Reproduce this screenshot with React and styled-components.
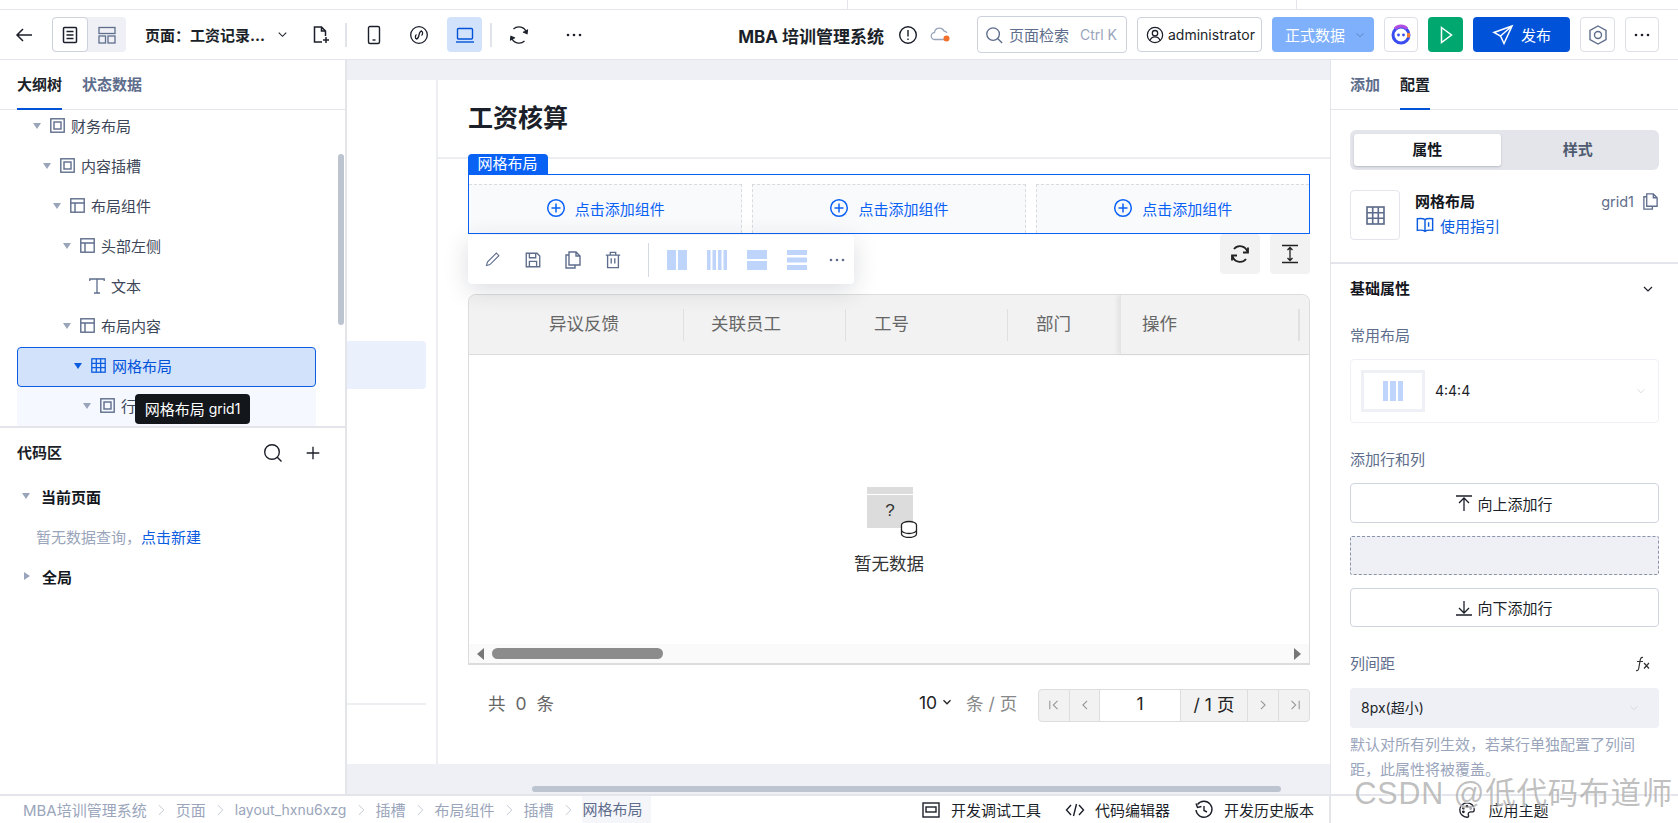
import React from 'react';
import styled, { createGlobalStyle } from 'styled-components';

const Global = createGlobalStyle`
  html, body { margin: 0; padding: 0; background: #fff; }
  body { font-family: Inter, "Noto Sans CJK SC", "Noto Sans", sans-serif; font-size: 15px; color: #1b1f29; }
  * { box-sizing: border-box; }
  #root { width: 1678px; height: 823px; overflow: hidden; }
`;

const Shell = styled.div`position: relative; width: 1678px; height: 823px; display: flex; flex-direction: column; overflow: hidden;`;
const TopStrip = styled.div`height: 10px; flex: none; border-bottom: 1px solid #e3e5ea; display: flex;`;
const StripTick = styled.div`width: 1px; height: 9px; background: #e3e5ea; margin-left: ${p => p.$ml}px;`;

const Header = styled.header`height: 50px; flex: none; display: flex; align-items: center; border-bottom: 1px solid #e3e5ea; padding: 0 19px 0 14px; background: #fff;`;
const IconSlot = styled.span`display: inline-flex; align-items: center; justify-content: center; flex: none; width: ${p => p.$w || 20}px; height: ${p => p.$h || p.$w || 20}px; margin-left: ${p => p.$ml || 0}px; color: ${p => p.$c || '#1b1f29'};`;
const ViewSwitch = styled.div`display: flex; margin-left: 18px; width: 74px; height: 35px; background: #eff0f5; border-radius: 4px;`;
const ViewTab = styled.div`width: ${p => p.$on ? 36 : 38}px; display: flex; align-items: center; justify-content: center; border-radius: 4px; color: ${p => p.$on ? '#1b1f29' : '#5e6d8c'}; ${p => p.$on && 'background:#fff;border:1px solid #ccd1dc;'}`;
const PageName = styled.div`margin-left: 19px; width: 122px; font-weight: 700; font-size: 15px; white-space: nowrap; color: #1b1f29;`;
const VDivider = styled.div`width: 2px; height: 24px; background: #e0e3e9; flex: none; margin-left: ${p => p.$ml}px;`;
const DeviceOn = styled.div`width: 35px; height: 35px; flex: none; margin-left: ${p => p.$ml}px; background: #d2e2fb; border-radius: 4px; display: flex; align-items: center; justify-content: center; color: #0052d9;`;
const Title = styled.div`margin-left: auto; padding-top: 2px; font-weight: 700; font-size: 17px; white-space: nowrap; color: #1b1f29;`;
const SearchBox = styled.div`margin-left: 25px; width: 150px; height: 37px; border: 1px solid #ccd1dc; border-radius: 4px; display: flex; align-items: center; padding: 0 9px 0 6px; gap: 5px; color: #5e6d8c; white-space: nowrap;`;
const Kbd = styled.span`margin-left: auto; color: #9aa5bb; font-size: 14px;`;
const UserBox = styled.div`margin-left: 10px; width: 125px; height: 35px; border: 1px solid #ccd1dc; border-radius: 4px; display: flex; align-items: center; padding-left: 7px; gap: 3px; color: #1b1f29; font-size: 14px; white-space: nowrap;`;
const DataBtn = styled.div`margin-left: 10px; width: 102px; height: 35px; background: #7fb0fb; border-radius: 4px; color: #fff; display: flex; align-items: center; padding-left: 13px; gap: 8px;`;
const IconBtn = styled.div`margin-left: 10px; width: ${p => p.$w || 34}px; height: 35px; border: 1px solid #dcdfe6; border-radius: 4px; display: flex; align-items: center; justify-content: center; color: #5e6d8c; background: #fff;`;
const GreenBtn = styled.div`margin-left: 10px; width: 35px; height: 35px; background: #00a870; border-radius: 4px; display: flex; align-items: center; justify-content: center; color: #fff;`;
const PublishBtn = styled.div`margin-left: 10px; width: 97px; height: 35px; background: #0052d9; border-radius: 4px; display: flex; align-items: center; justify-content: center; gap: 7px; color: #fff;`;

const Body = styled.div`flex: 1; min-height: 0; display: flex;`;
const MainCol = styled.div`width: 1330px; flex: none; display: flex; flex-direction: column;`;
const WorkRow = styled.div`flex: 1; min-height: 0; display: flex;`;

const LeftPanel = styled.aside`position: relative; width: 347px; flex: none; border-right: 2px solid #e3e5ea; display: flex; flex-direction: column; background: #fff;`;
const Tabs = styled.div`height: 50px; flex: none; display: flex; gap: 20px; padding-left: ${p => p.$pl || 17}px; border-bottom: 1px solid #e3e5ea;`;
const Tab = styled.div`height: 50px; display: flex; align-items: center; padding-bottom: 4px; font-weight: 700; font-size: 15px; color: ${p => p.$on ? '#1b1f29' : '#5e6d8c'}; ${p => p.$on && 'box-shadow: inset 0 -2px 0 #0052d9;'}`;
const TreeBox = styled.div`position: relative; height: 318px; flex: none; overflow: hidden; border-bottom: 2px solid #e3e5ea; padding: 0 29px 0 17px;`;
const TreeInner = styled.div`margin-top: -3.5px;`;
const TreeRow = styled.div`height: 40px; display: flex; align-items: center; padding-bottom: 2px; padding-left: ${p => 16 + p.$lv * 10}px; border-radius: 4px; color: ${p => p.$sel ? '#0052d9' : '#3c4658'}; ${p => p.$sel && 'background:#d2e2fb;border:1.5px solid #0b5ce0;'} ${p => p.$hov && 'background:#f5f8ff;'}`;
const Caret = styled.span`width: 0; height: 0; flex: none; border-left: 4px solid transparent; border-right: 4px solid transparent; border-top: 6px solid ${p => p.$c || '#9aa5bb'}; margin-right: 8px;`;
const CaretSpace = styled.span`width: 8px; flex: none; margin-right: 8px;`;
const CaretRight = styled.span`width: 0; height: 0; flex: none; border-top: 4px solid transparent; border-bottom: 4px solid transparent; border-left: 6px solid #9aa5bb;`;
const TreeLabel = styled.span`margin-left: 6px; white-space: nowrap;`;
const TreeBar = styled.div`position: absolute; left: 338px; top: 94px; width: 6px; height: 171px; border-radius: 3px; background: #bcc4d0;`;
const Tip = styled.div`position: absolute; left: 135px; top: 284px; width: 115px; height: 30px; background: #13161b; border-radius: 4px; color: #fff; font-size: 15px; padding-bottom: 2px; display: flex; align-items: center; justify-content: center; gap: 4px; white-space: nowrap;`;
const TipId = styled.span`font-size: 14px;`;

const CodeArea = styled.div`flex: 1; padding: 0 0 0 17px;`;
const CodeHead = styled.div`height: 50px; display: flex; align-items: center; padding-right: 22px;`;
const CodeTitle = styled.span`font-weight: 700; padding-bottom: 4px;`;
const CodeTools = styled.div`margin-left: auto; display: flex; gap: 20px;`;
const CodeRow = styled.div`height: 40px; display: flex; align-items: center; padding-bottom: 4px; padding-left: ${p => p.$pl || 6}px; font-weight: ${p => p.$bold ? 700 : 400}; color: ${p => p.$bold ? '#14171d' : '#9aa5bb'};`;
const CodeName = styled.span`margin-left: ${p => p.$ml}px;`;
const LinkText = styled.span`color: #0b5ce0;`;

const Canvas = styled.main`flex: 1; min-width: 0; position: relative; overflow: hidden; background: #eff0f5; padding-top: 20px;`;
const HBar = styled.div`position: absolute; left: 185px; top: 726px; width: 749px; height: 6px; border-radius: 3px; background: #bcc4d0;`;
const Frame = styled.div`height: 684px; background: #fff; display: flex;`;
const SideMenu = styled.div`width: 91px; flex: none; border-right: 2px solid #eceef2; padding-right: 10px;`;
const MenuOn = styled.div`margin-top: 261px; height: 48px; background: #eaf1fd; border-radius: 0 4px 4px 0;`;
const MenuLine = styled.div`margin-top: 314px; height: 2px; background: #eceef2;`;
const Page = styled.div`flex: 1; min-width: 0; overflow: hidden;`;
const PageHead = styled.div`height: 79px; border-bottom: 2px solid #eceef2; padding: 0 0 6px 30px; display: flex; align-items: center; font-size: 25px; font-weight: 700; color: #1b1f29;`;
const PageBody = styled.div`padding: 15px 20px 0 30px;`;
const GridSel = styled.div`position: relative; height: 60px; border: 1.5px solid #0a62f5; padding-top: 9px; display: grid; grid-template-columns: repeat(3, 1fr); gap: 10px;`;
const GridTag = styled.div`position: absolute; left: -1.5px; top: -21.5px; width: 80px; height: 20px; background: #0a62f5; color: #fff; border-radius: 4px 4px 0 0; font-size: 15px; line-height: 19px; text-align: center;`;
const GridCell = styled.div`border: 1px dashed #d8dbe0; border-bottom: 0; ${p => p.$first && 'border-left:0;'} ${p => p.$last && 'border-right:0;'} background: #f9fafc; color: #0a62f5; display: flex; align-items: center; justify-content: center; gap: 9px; padding-bottom: 2px;`;
const FloatBar = styled.div`position: absolute; z-index: 3; left: -1.5px; top: 60px; width: 386px; height: 49px; background: #fff; border-radius: 4px; box-shadow: 0 6px 24px rgba(30,40,60,.16); display: flex; align-items: center; color: #5e6d8c; padding-left: 15px;`;
const BarIcon = styled.span`width: 20px; height: 20px; flex: none; margin-right: 20px; display: inline-flex; align-items: center; justify-content: center;`;
const BarDivider = styled.span`width: 1px; height: 34px; background: #d5d9e2; margin: 0 18px 0 5px; flex: none;`;
const SideActions = styled.div`height: 40px; display: flex; justify-content: flex-end; gap: 10px;`;
const SideAction = styled.div`width: 40px; height: 40px; background: #f2f2f2; border-radius: 4px; display: flex; align-items: center; justify-content: center; color: #222;`;
const TableWrap = styled.div`margin-top: 20px; height: 371px; border: 1px solid #dcdcdc; border-bottom: 2px solid #dcdcdc; border-radius: 8px 8px 0 0; display: flex; flex-direction: column; overflow: hidden;`;
const THead = styled.div`height: 60px; flex: none; background: #f2f2f2; border-bottom: 1px solid #dcdcdc; display: flex; align-items: center; font-size: 17.5px; color: #666;`;
const TH = styled.div`width: ${p => p.$w}px; flex: none; padding-left: ${p => p.$pl}px; height: 32px; line-height: 30px; border-right: 1px solid #e0e0e0; white-space: nowrap;`;
const THFixed = styled.div`flex: 1; align-self: stretch; margin-left: -1px; display: flex; align-items: center; padding-left: 21px; box-shadow: -3px 0 4px rgba(0,0,0,.06); border-left: 1px solid #e4e4e4;`;
const THFixedText = styled.span`line-height: 30px; margin-bottom: 2px;`;
const THFixedBar = styled.span`margin-left: auto; margin-right: 9px; width: 2px; height: 32px; background: #e0e0e0;`;
const EmptyBox = styled.div`flex: 1; display: flex; flex-direction: column; align-items: center; padding-top: 131px; font-size: 17.5px; color: #333;`;
const EmptyArt = styled.div`margin-left: 5px; height: 52px;`;
const EmptyText = styled.div`margin-top: 13px; line-height: 26px;`;
const HScroll = styled.div`height: 19px; flex: none; background: #fafafa; display: flex; align-items: center; padding: 0 8px;`;
const HThumb = styled.div`margin-left: 8px; width: 171px; height: 11px; border-radius: 6px; background: #8c8c8c;`;
const ArrowL = styled.span`width: 0; height: 0; border-top: 6.5px solid transparent; border-bottom: 6.5px solid transparent; border-right: 7px solid #777;`;
const ArrowR = styled.span`margin-left: auto; width: 0; height: 0; border-top: 6.5px solid transparent; border-bottom: 6.5px solid transparent; border-left: 7px solid #777;`;
const PagerRow = styled.div`height: 80px; display: flex; align-items: center; font-size: 17.5px; color: #666; padding-left: 20px;`;
const Total = styled.div`word-spacing: 5px; padding-bottom: 6px;`;
const SizePick = styled.div`margin-left: auto; color: #222; display: flex; align-items: center; gap: 3px; width: 47px; padding-bottom: 6px;`;
const PerPage = styled.div`color: #888; white-space: nowrap; width: 72px; padding-bottom: 6px;`;
const Pager = styled.div`width: 272px; height: 33px; border: 1px solid #ddd; border-radius: 4px; background: #f2f2f2; display: flex; align-items: center; overflow: hidden;`;
const PagerBtn = styled.div`width: ${p => p.$w || 31}px; height: 100%; flex: none; border-right: ${p => p.$last ? 0 : '1px solid #ddd'}; display: flex; align-items: center; justify-content: center; color: #999; background: ${p => p.$white ? '#fff' : 'transparent'}; ${p => p.$txt && 'color:#222; padding-bottom: 3px;'}`;

const BottomBar = styled.footer`height: 29px; flex: none; border-top: 2px solid #e3e5ea; background: #fff; display: flex; align-items: center; padding-left: 23px; color: #9aa5bb; white-space: nowrap; font-size: 15px;`;
const Crumb = styled.span`${p => p.$latin && 'font-size: 14px;'} ${p => p.$on && 'color:#5e6d8c;background:#f5f6fa;padding:0 9px 0 0;height:27px;line-height:27px;'}`;
const CrumbSep = styled.span`display: inline-flex; width: 29px; justify-content: center; color: #bcc4d0;`;
const BottomTools = styled.div`margin-left: auto; display: flex; align-items: center; color: #1b1f29; padding-right: 16px;`;
const BottomTool = styled.span`display: inline-flex; align-items: center; gap: 10px; margin-left: ${p => p.$ml}px;`;

const RightPanel = styled.aside`flex: 1; min-width: 0; border-left: 2px solid #e3e5ea; display: flex; flex-direction: column; background: #fff; margin-left: -1px;`;
const RightBody = styled.div`flex: 1; min-height: 0; overflow: hidden;`;
const RightTop = styled.div`padding: 20px 19px 22px 19px; border-bottom: 2px solid #e3e5ea;`;
const Segment = styled.div`height: 40px; background: #e3e5ea; border-radius: 6px; padding: 4px; display: flex;`;
const SegItem = styled.div`width: ${p => p.$on ? 147 : 155}px; height: 32px; padding-bottom: 4px; display: flex; align-items: center; justify-content: center; border-radius: 3px; font-weight: 700; color: ${p => p.$on ? '#14171d' : '#4f5b70'}; ${p => p.$on && 'background:#fff;box-shadow:0 1px 2px rgba(60,70,90,.25);'}`;
const InfoRow = styled.div`margin-top: 20px; height: 50px; display: flex;`;
const InfoIcon = styled.div`width: 50px; height: 50px; border: 1px solid #e3e5ea; border-radius: 4px; display: flex; align-items: center; justify-content: center; color: #5e6d8c;`;
const InfoText = styled.div`margin: -2px 0 0 15px; flex: 1;`;
const InfoLine = styled.div`display: flex; align-items: center; height: 24px; margin-top: ${p => p.$mt || 0}px;`;
const InfoName = styled.span`font-weight: 700; color: #14171d;`;
const InfoId = styled.span`margin-left: auto; color: #5e6d8c; font-size: 14.5px; display: inline-flex; align-items: center; gap: 8px; margin-top: 2px;`;
const GuideLink = styled.span`display: inline-flex; align-items: center; gap: 6px; color: #0b5ce0; margin-left: 1px;`;
const Section = styled.div`padding: 0 19px 0 19px;`;
const SectionHead = styled.div`height: 49px; display: flex; align-items: center; justify-content: space-between; padding-right: 3px;`;
const SectionTitle = styled.span`font-weight: 700; color: #14171d; padding-bottom: 2px;`;
const Label = styled.div`height: 22px; line-height: 22px; margin-top: ${p => p.$mt}px; color: #5e6d8c; display: flex; justify-content: space-between; align-items: center; padding-right: 7px;`;
const LayoutSelect = styled.div`margin-top: 12px; height: 64px; border: 1px solid #eff0f5; border-radius: 4px; padding: 0 10px; display: flex; align-items: center;`;
const LayoutThumb = styled.div`width: 64px; height: 42px; border: 3px solid #eff0f5; display: flex; align-items: center; justify-content: center; gap: 2px;`;
const LayoutBar = styled.span`width: 5.5px; height: 20px; background: #bfd4fb;`;
const LayoutVal = styled.span`margin: 0 0 2px 10px; color: #1b1f29; font-size: 14px;`;
const EndSlot = styled.span`margin-left: auto; display: inline-flex; color: #cfd3da;`;
const OutlineBtn = styled.div`margin-top: ${p => p.$mt || 13}px; height: ${p => p.$h || 40}px; border: 1px solid #d0d4de; border-radius: 4px; display: flex; align-items: center; justify-content: center; gap: 5px; color: #1b1f29;`;
const DashBox = styled.div`margin-top: 13px; height: 39px; border: 1px dashed #8a94a8; background: #eff0f5; border-radius: 2px;`;
const FillSelect = styled.div`margin-top: 13px; height: 40px; background: #eff0f5; border-radius: 4px; display: flex; align-items: center; padding: 0 18px 0 11px; color: #1b1f29;`;
const FillValue = styled.span`font-size: 14px; padding-bottom: 3px;`;
const Hint = styled.div`margin-top: 4px; line-height: 25px; color: #9aa5bb; font-size: 15px; padding-right: 10px;`;
const ThemeBar = styled.div`height: 29px; flex: none; border-top: 2px solid #e3e5ea; display: flex; align-items: center; justify-content: center; gap: 12px; color: #1b1f29; padding-right: 2px;`;
const Watermark = styled.div`position: absolute; right: 5px; top: 775px; font-family: "Liberation Sans", "Noto Sans CJK SC", sans-serif; font-size: 30.5px; line-height: 36px; letter-spacing: .8px; color: rgba(130,130,130,.5); text-shadow: 1px 1px 1px rgba(255,255,255,.8); white-space: nowrap; pointer-events: none;`;

const S = ({ w = 20, children, sw = 1.5, fill = 'none', vb = 20 }) => (
  <svg width={w} height={w} viewBox={`0 0 ${vb} ${vb}`} fill={fill} stroke="currentColor" strokeWidth={sw} strokeLinecap="butt" strokeLinejoin="miter">{children}</svg>
);
const Chevron = ({ w = 14, sw = 1.4 }) => <S w={w} sw={sw}><path d="M5 7.5l5 5 5-5" /></S>;
const Dots = ({ c = 'currentColor' }) => <svg width="20" height="20" viewBox="0 0 20 20" fill={c}><circle cx="4" cy="10" r="1.3" /><circle cx="10" cy="10" r="1.3" /><circle cx="16" cy="10" r="1.3" /></svg>;
const FrameIcon = () => <S w={15} vb={15} sw={1.4}><rect x=".8" y=".8" width="13.4" height="13.4" /><rect x="4" y="4" width="7" height="7" /></S>;
const PanelIcon = () => <S w={15} vb={15} sw={1.4}><rect x=".8" y=".8" width="13.4" height="13.4" /><path d="M.8 5h13.4M5 5v9.2" /></S>;
const TextIcon = () => <S w={16} vb={16} sw={1.3}><path d="M.8 3V1h14.4v2M8 1v14M5 15h6" /></S>;
const GridIcon = ({ w = 15 }) => <S w={w} vb={15} sw={1.3}><rect x=".8" y=".8" width="13.4" height="13.4" /><path d="M5.3.8v13.4M9.7.8v13.4M.8 5.3h13.4M.8 9.7h13.4" /></S>;
const CopyDoc = ({ w = 18 }) => <S w={w} vb={18} sw={1.4}><path d="M5 1h7l4 4v9H5zM12 1v4h4M5 4H2v13h9v-3" /></S>;
const Plus = () => <S w={20}><circle cx="10" cy="10" r="8.3" /><path d="M10 5.5v9M5.5 10h9" /></S>;
const Rows2 = () => <svg width="20" height="20" viewBox="0 0 20 20" fill="#bfd4fb"><rect width="20" height="9" /><rect y="11" width="20" height="9" /></svg>;
const Rows3 = () => <svg width="20" height="20" viewBox="0 0 20 20" fill="#bfd4fb"><rect width="20" height="5" /><rect y="7.5" width="20" height="5" /><rect y="15" width="20" height="5" /></svg>;
const Cols2 = () => <svg width="20" height="20" viewBox="0 0 20 20" fill="#bfd4fb"><rect width="9" height="20" /><rect x="11" width="9" height="20" /></svg>;
const Cols4 = () => <svg width="20" height="20" viewBox="0 0 20 20" fill="#bfd4fb"><rect width="3.5" height="20" /><rect x="5.5" width="3.5" height="20" /><rect x="11" width="3.5" height="20" /><rect x="16.5" width="3.5" height="20" /></svg>;

const tree = [
  { lv: 0, ic: <FrameIcon />, t: '财务布局' },
  { lv: 1, ic: <FrameIcon />, t: '内容插槽' },
  { lv: 2, ic: <PanelIcon />, t: '布局组件' },
  { lv: 3, ic: <PanelIcon />, t: '头部左侧' },
  { lv: 4, ic: <TextIcon />, t: '文本', leaf: true },
  { lv: 3, ic: <PanelIcon />, t: '布局内容' },
  { lv: 4, ic: <GridIcon />, t: '网格布局', sel: true },
  { lv: 5, ic: <FrameIcon />, t: '行', hov: true },
];
const crumbs = ['MBA培训管理系统', '页面', 'layout_hxnu6xzg', '插槽', '布局组件', '插槽'];

export default function App() {
  return (
    <Shell>
      <Global />
      <TopStrip><StripTick $ml={847} /><StripTick $ml={448} /></TopStrip>
      <Header>
        <IconSlot><S w={20}><path d="M18 10H3M9 4l-6 6 6 6" /></S></IconSlot>
        <ViewSwitch>
          <ViewTab $on><S w={18} vb={18} sw={1.5}><rect x="2.5" y="1.5" width="13" height="15" rx="1" /><path d="M5.5 5.5h7M5.5 9h7M5.5 12.5h7" /></S></ViewTab>
          <ViewTab><S w={20} sw={1.3}><rect x="2" y="2.5" width="16" height="6" /><rect x="2" y="11" width="6.5" height="7" /><rect x="11" y="11" width="7" height="7" /></S></ViewTab>
        </ViewSwitch>
        <PageName>页面：工资记录...</PageName>
        <IconSlot $w={16} $ml={7}><Chevron w={15} /></IconSlot>
        <IconSlot $ml={20}><S w={20}><path d="M12 17H4.500V2h7l4 4v5M11.500 2v4h4M13 15h6M16 12v6" /></S></IconSlot>
        <VDivider $ml={15} />
        <IconSlot $ml={17}><S w={20} sw={1.4}><rect x="4.500" y="1.500" width="11" height="17" rx="1.500" /><path d="M8.500 15h3" /></S></IconSlot>
        <IconSlot $ml={25}><S w={20} sw={1.3}><circle cx="10" cy="10" r="8.300" /><path d="M7 14c2 0 2.500-1.500 3-4s1-4 3-4M7.500 9.500c-1.500 1-1.500 4 0 4.500M12.500 10.500c1.500-1 1.500-4 0-4.500" /></S></IconSlot>
        <DeviceOn $ml={18}><S w={20} sw={1.4}><rect x="2.500" y="3.500" width="15" height="10.500" rx="1" /><path d="M1 17h18" /></S></DeviceOn>
        <VDivider $ml={8} />
        <IconSlot $ml={17}><S w={20} sw={1.3}><path d="M17.500 7.500A8 8 0 0 0 4.500 4M2.500 12.500a8 8 0 0 0 13 3.500" /><path d="M14 7l4 1.500.5-4M6 13l-4-1.500-.5 4" fill="currentColor" /></S></IconSlot>
        <IconSlot $ml={35}><Dots /></IconSlot>

        <Title>MBA 培训管理系统</Title>
        <IconSlot $ml={14}><S w={20} sw={1.4}><circle cx="10" cy="10" r="8.300" /><path d="M10 5v6.500M10 13.500v1.500" /></S></IconSlot>
        <IconSlot $ml={12} $w={22} $c="#9aa5bb"><svg width="22" height="20" viewBox="0 0 22 20" fill="none"><path d="M15 14.500H5a3.500 3.500 0 0 1-.5-7 5 5 0 0 1 9.500-1.500 4 4 0 0 1 3 2" stroke="currentColor" strokeWidth="1.300" /><circle cx="16.500" cy="13.500" r="3" fill="#f0702c" /></svg></IconSlot>
        <SearchBox>
          <IconSlot $c="#5e6d8c"><S w={18} vb={20} sw={1.500}><circle cx="9" cy="9" r="7" /><path d="M14 14l5 5" /></S></IconSlot>
          页面检索<Kbd>Ctrl K</Kbd>
        </SearchBox>
        <UserBox>
          <IconSlot><S w={18} vb={20} sw={1.400}><circle cx="10" cy="10" r="8.500" /><circle cx="10" cy="8" r="3" /><path d="M4.500 16c1-3 3-4 5.500-4s4.500 1 5.500 4" /></S></IconSlot>
          administrator
        </UserBox>
        <DataBtn>正式数据<IconSlot $w={14} $c="#5e83c0"><Chevron w={14} /></IconSlot></DataBtn>
        <IconBtn>
          <svg width="22" height="22" viewBox="0 0 22 22" fill="none">
            <circle cx="11" cy="11" r="8" stroke="#3a4df0" strokeWidth="3" />
            <path d="M5 4.800A8 8 0 0 1 17 4.800" stroke="#b04fe0" strokeWidth="3" fill="none" />
            <path d="M18.500 9v4.500" stroke="#f2803a" strokeWidth="3" />
            <circle cx="8.500" cy="11" r="1.400" fill="#3a4df0" /><circle cx="13.500" cy="11" r="1.400" fill="#3a4df0" />
          </svg>
        </IconBtn>
        <GreenBtn><S w={20} sw={1.500}><path d="M5.500 2.500l10 7.500-10 7.500z" /></S></GreenBtn>
        <PublishBtn><S w={22} vb={22} sw={1.500}><path d="M20 2L2 8.500l6.500 3.500L12 19.500zM8.500 12L20 2" /></S>发布</PublishBtn>
        <IconBtn $w={35}><S w={22} vb={22} sw={1.400}><path d="M11 2l8 4.500v9L11 20l-8-4.500v-9z" /><circle cx="11" cy="11" r="3.500" /></S></IconBtn>
        <IconBtn><Dots c="#1b1f29" /></IconBtn>
      </Header>

      <Body>
        <MainCol>
          <WorkRow>
            <LeftPanel>
              <Tabs><Tab $on>大纲树</Tab><Tab>状态数据</Tab></Tabs>
              <TreeBox>
                <TreeInner>
                  {tree.map(n => (
                    <TreeRow key={n.t} $lv={n.lv} $sel={n.sel} $hov={n.hov}>
                      {n.leaf ? <CaretSpace /> : <Caret $c={n.sel ? '#0b5ce0' : undefined} />}
                      <IconSlot $w={16} $c={n.sel ? '#0b5ce0' : '#5e6d8c'}>{n.ic}</IconSlot>
                      <TreeLabel>{n.t}</TreeLabel>
                    </TreeRow>
                  ))}
                </TreeInner>
                <Tip>网格布局<TipId>grid1</TipId></Tip>
              </TreeBox>
              <CodeArea>
                <CodeHead>
                  <CodeTitle>代码区</CodeTitle>
                  <CodeTools>
                    <IconSlot><S w={20} sw={1.400}><circle cx="9" cy="9" r="7.300" /><path d="M14 14l4.500 4.500" /></S></IconSlot>
                    <IconSlot><S w={18} vb={20} sw={1.500}><path d="M10 3v14M3 10h14" /></S></IconSlot>
                  </CodeTools>
                </CodeHead>
                <CodeRow $bold $pl={5}><Caret /><CodeName $ml={3}>当前页面</CodeName></CodeRow>
                <CodeRow $pl={19}>暂无数据查询，<LinkText>点击新建</LinkText></CodeRow>
                <CodeRow $bold $pl={7}><CaretRight /><CodeName $ml={12}>全局</CodeName></CodeRow>
              </CodeArea>
              <TreeBar />
            </LeftPanel>

            <Canvas>
              <Frame>
                <SideMenu><MenuOn /><MenuLine /></SideMenu>
                <Page>
                  <PageHead>工资核算</PageHead>
                  <PageBody>
                    <GridSel>
                      <GridTag>网格布局</GridTag>
                      <GridCell $first><Plus />点击添加组件</GridCell>
                      <GridCell><Plus />点击添加组件</GridCell>
                      <GridCell $last><Plus />点击添加组件</GridCell>
                      <FloatBar>
                        <BarIcon><S w={17} sw={1.300}><path d="M3 17l1-4L14.500 2.500l3 3L7 16z" /></S></BarIcon>
                        <BarIcon><S w={18} sw={1.500}><path d="M2.500 2.500h12l3 3v12h-15zM6 2.500v5h7v-5M6 17.500v-6h8v6" /></S></BarIcon>
                        <BarIcon><CopyDoc /></BarIcon>
                        <BarIcon><S w={18} sw={1.500}><path d="M2 4.500h16M7 4.500v-3h6v3M4 4.500v14h12v-14M8 8v6M12 8v6" /></S></BarIcon>
                        <BarDivider />
                        <BarIcon><Cols2 /></BarIcon>
                        <BarIcon><Cols4 /></BarIcon>
                        <BarIcon><Rows2 /></BarIcon>
                        <BarIcon><Rows3 /></BarIcon>
                        <BarIcon><Dots /></BarIcon>
                      </FloatBar>
                    </GridSel>
                    <SideActions>
                      <SideAction><S w={20} sw={1.800}><path d="M17.500 8A7.700 7.700 0 0 0 4 5M2.500 12A7.700 7.700 0 0 0 16 15" /><path d="M18 3.500v5h-5M2 16.500v-5h5" fill="none" /></S></SideAction>
                      <SideAction><S w={20} sw={1.300}><path d="M2 1.500h16M2 18.500h16M10 4v12M7.500 6L10 3.500 12.500 6M7.500 14l2.500 2.500 2.500-2.500" /></S></SideAction>
                    </SideActions>
                    <TableWrap>
                      <THead>
                        <TH $w={215} $pl={80}>异议反馈</TH>
                        <TH $w={162} $pl={27}>关联员工</TH>
                        <TH $w={162} $pl={28}>工号</TH>
                        <TH $w={113} $pl={28}>部门</TH>
                        <THFixed><THFixedText>操作</THFixedText><THFixedBar /></THFixed>
                      </THead>
                      <EmptyBox>
                        <EmptyArt>
                          <svg width="52" height="52" viewBox="0 0 52 52" fill="none">
                            <rect x="1" y="1" width="46" height="7" fill="#dcdcdc" />
                            <rect x="1" y="9" width="46" height="33" fill="#dcdcdc" />
                            <text x="24" y="30" fontSize="17" fill="#333" textAnchor="middle" fontFamily="Liberation Sans">?</text>
                            <ellipse cx="43" cy="39" rx="7.500" ry="3.500" fill="#fff" stroke="#222" strokeWidth="1.300" />
                            <path d="M35.500 39v9c0 2 3.500 3.500 7.500 3.500s7.500-1.500 7.500-3.500v-9M35.500 44c0 2 3.500 3.500 7.500 3.500s7.500-1.500 7.500-3.500" fill="#fff" stroke="#222" strokeWidth="1.300" />
                          </svg>
                        </EmptyArt>
                        <EmptyText>暂无数据</EmptyText>
                      </EmptyBox>
                      <HScroll><ArrowL /><HThumb /><ArrowR /></HScroll>
                    </TableWrap>
                    <PagerRow>
                      <Total>共 0 条</Total>
                      <SizePick>10<IconSlot $w={14} $c="#222"><Chevron w={14} sw={1.800} /></IconSlot></SizePick>
                      <PerPage>条 / 页</PerPage>
                      <Pager>
                        <PagerBtn><S w={14} sw={1.600}><path d="M4 4v12M15 4l-6 6 6 6" /></S></PagerBtn>
                        <PagerBtn $w={30}><S w={14} sw={1.600}><path d="M13 4l-6 6 6 6" /></S></PagerBtn>
                        <PagerBtn $w={81} $white $txt>1</PagerBtn>
                        <PagerBtn $w={67} $txt>/ 1 页</PagerBtn>
                        <PagerBtn><S w={14} sw={1.600}><path d="M7 4l6 6-6 6" /></S></PagerBtn>
                        <PagerBtn $last><S w={14} sw={1.600}><path d="M16 4v12M5 4l6 6-6 6" /></S></PagerBtn>
                      </Pager>
                    </PagerRow>
                  </PageBody>
                </Page>
              </Frame>
              <HBar />
            </Canvas>
          </WorkRow>
          <BottomBar>
            {crumbs.map((c, i) => (
              <React.Fragment key={i}>
                <Crumb $latin={c.startsWith('layout')}>{c}</Crumb>
                <CrumbSep><S w={14} sw={1.300}><path d="M7 3l7 7-7 7" /></S></CrumbSep>
              </React.Fragment>
            ))}
            <Crumb $on>网格布局</Crumb>
            <BottomTools>
              <BottomTool $ml={0}><S w={20} sw={1.400}><rect x="2" y="3" width="16" height="14" /><rect x="5" y="7" width="10" height="5" /></S>开发调试工具</BottomTool>
              <BottomTool $ml={24}><S w={20} sw={1.400}><path d="M6 5L1.500 10 6 15M14 5l4.500 5-4.500 5M11.500 4l-3 12" /></S>代码编辑器</BottomTool>
              <BottomTool $ml={24}><S w={20} sw={1.400}><path d="M3.500 4.500A8 8 0 1 1 2 10M2 3.500l1.500 4 4-1M10 6v4.500l3 1.500" /></S>开发历史版本</BottomTool>
            </BottomTools>
          </BottomBar>
        </MainCol>

        <RightPanel>
          <Tabs $pl={19}><Tab>添加</Tab><Tab $on>配置</Tab></Tabs>
          <RightBody>
            <RightTop>
              <Segment><SegItem $on>属性</SegItem><SegItem>样式</SegItem></Segment>
              <InfoRow>
                <InfoIcon><GridIcon w={19} /></InfoIcon>
                <InfoText>
                  <InfoLine><InfoName>网格布局</InfoName><InfoId>grid1<CopyDoc w={17} /></InfoId></InfoLine>
                  <InfoLine $mt={1}>
                    <GuideLink><S w={18} sw={1.600}><path d="M10 4C8 2.500 5 2.500 1.500 3v13c3.500-.5 6.500-.5 8.500 1 2-1.500 5-1.500 8.500-1V3C15 2.500 12 2.500 10 4zM10 4v13M14 7v5" /></S>使用指引</GuideLink>
                  </InfoLine>
                </InfoText>
              </InfoRow>
            </RightTop>
            <Section>
              <SectionHead><SectionTitle>基础属性</SectionTitle><IconSlot $w={16} $c="#1b1f29"><Chevron w={16} sw={1.500} /></IconSlot></SectionHead>
              <Label $mt={12}>常用布局</Label>
              <LayoutSelect>
                <LayoutThumb><LayoutBar /><LayoutBar /><LayoutBar /></LayoutThumb>
                <LayoutVal>4:4:4</LayoutVal>
                <EndSlot><Chevron w={14} sw={1.200} /></EndSlot>
              </LayoutSelect>
              <Label $mt={26}>添加行和列</Label>
              <OutlineBtn $mt={12}><S w={16} vb={16} sw={1.300}><path d="M0 1h16M8 16V3M3 8l5-5 5 5" /></S>向上添加行</OutlineBtn>
              <DashBox />
              <OutlineBtn $h={39}><S w={16} vb={16} sw={1.300}><path d="M0 15h16M8 1v12M3 8l5 5 5-5" /></S>向下添加行</OutlineBtn>
              <Label $mt={26}>列间距<IconSlot $w={18} $c="#333"><svg width="18" height="18" viewBox="0 0 18 18" fill="none" stroke="currentColor" strokeWidth="1.200"><path d="M9 2.500C7 2 6.500 3.500 6 6l-1.200 7c-.3 2-1 3-2.800 2.500M3 6.500h6M10 8l5 5.500M15 8l-5 5.500" /></svg></IconSlot></Label>
              <FillSelect><FillValue>8px(超小)</FillValue><EndSlot><Chevron w={14} sw={1.200} /></EndSlot></FillSelect>
              <Hint>默认对所有列生效，若某行单独配置了列间距，此属性将被覆盖。</Hint>
            </Section>
          </RightBody>
          <ThemeBar>
            <S w={18} sw={1.500}><path d="M10 2a8 8 0 1 0 0 16c2 0 2-1.500 1.500-2.500S11.500 12 14 12h2.500c1.200 0 1.500-1 1.500-2.500C18 5.500 14.500 2 10 2z" /><circle cx="6" cy="8" r=".8" /><circle cx="10" cy="6" r=".8" /><circle cx="14" cy="8" r=".8" /><circle cx="6" cy="12" r=".8" /></S>
            应用主题
          </ThemeBar>
        </RightPanel>
      </Body>
      <Watermark>CSDN @低代码布道师</Watermark>
    </Shell>
  );
}
